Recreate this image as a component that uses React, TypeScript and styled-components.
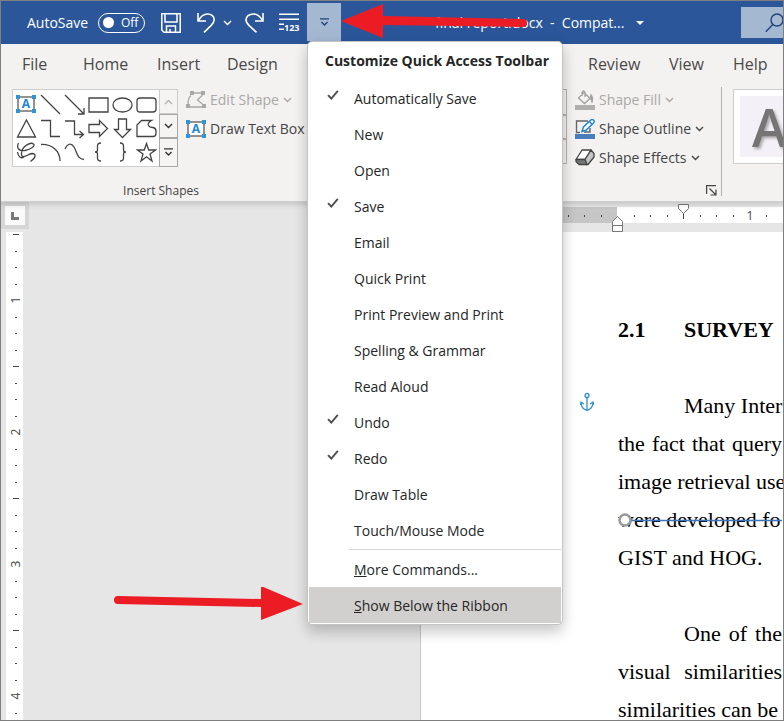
import React, { useEffect, useState } from "react";
import styled, { createGlobalStyle } from "styled-components";

const GlobalStyle = createGlobalStyle`
  * { box-sizing: border-box; }
  body { margin: 0; font-family: "Open Sans", "Noto Sans", sans-serif; font-size: 14px; color: #444; }
  button { font: inherit; color: inherit; background: none; border: 0; padding: 0; margin: 0; text-align: left; }
  svg { display: block; flex: none; }
`;

const Window = styled.div`
  display: flex;
  flex-direction: column;
  height: 100vh;
  border: 1px solid #7f7f7f;
  background: #e6e6e6;
  overflow: hidden;
`;

/* ---------- title bar ---------- */

const TitleBar = styled.header`
  display: flex;
  align-items: center;
  height: 43px;
  flex: none;
  padding-left: 26px;
  background: #2b579a;
  color: #fff;
`;

const AutoSave = styled.label`
  display: flex;
  align-items: center;
  gap: 8px;
  width: 118px;
  flex: none;
`;

const AutoSaveText = styled.span`
  width: 63px;
  white-space: nowrap;
`;

const Switch = styled.button`
  display: flex;
  align-items: center;
  gap: 7px;
  width: 47px;
  height: 20px;
  padding-left: 4px;
  border: 1px solid #fff;
  border-radius: 10px;
  font-size: 12px;
  line-height: 18px;
`;

const Knob = styled.span`
  width: 11px;
  height: 11px;
  border-radius: 50%;
  background: #fff;
`;

const QuickButton = styled.button<{ $gap: number }>`
  margin-left: ${(p) => p.$gap}px;
  flex: none;
`;

const CustomizeAnchor = styled.div`
  position: relative;
  z-index: 2;
  flex: none;
  align-self: flex-start;
  margin: 2px 0 0 7px;
`;

const CustomizeButton = styled.button`
  display: flex;
  align-items: center;
  justify-content: center;
  width: 34px;
  height: 38px;
  background: #a5b8d2;
`;

const TopArrow = styled.svg`
  position: absolute;
  left: 100%;
  top: 0;
`;

const DocTitle = styled.button`
  display: flex;
  align-items: center;
  gap: 12px;
  margin-left: 94px;
  font-size: 14px;
  white-space: pre;
`;

const SearchButton = styled.button`
  display: flex;
  align-items: center;
  margin-left: auto;
  width: 42px;
  height: 31px;
  padding-left: 24px;
  background: #a5b8d2;
  overflow: hidden;
`;

/* ---------- menu ---------- */

const Menu = styled.div`
  position: absolute;
  top: 38px;
  left: 0;
  width: 256px;
  padding-bottom: 1px;
  background: #fff;
  border: 1px solid #c6c4c2;
  border-radius: 5px;
  box-shadow: 0 8px 14px rgba(0, 0, 0, 0.18), 0 0 16px rgba(0, 0, 0, 0.06);
  color: #262626;
`;

const MenuTitle = styled.div`
  height: 38px;
  padding-left: 17px;
  font-weight: 700;
  line-height: 38px;
  white-space: nowrap;
`;

const MenuItem = styled.button<{ $active?: boolean }>`
  position: relative;
  display: grid;
  grid-template-columns: 45px 1fr;
  align-items: center;
  width: 252px;
  height: 36px;
  margin-left: 1px;
  background: ${(p) => (p.$active ? "#d2d0ce" : "transparent")};
  white-space: nowrap;
`;

const CheckCell = styled.span`
  padding: 0 0 6px 18px;
`;

const MenuRule = styled.hr`
  height: 1px;
  margin: 1px 1px 1px 41px;
  border: 0;
  background: #d8d8d8;
`;

const SideArrow = styled.svg`
  position: absolute;
  right: 100%;
  top: 0;
  margin-right: 6px;
`;

/* ---------- ribbon ---------- */

const Ribbon = styled.div`
  flex: none;
  background: #f3f2f1;
  border-bottom: 1px solid #cfcfcf;
  box-shadow: 0 2px 6px rgba(0, 0, 0, 0.16);
  position: relative;
`;

const Tabs = styled.nav`
  display: flex;
  height: 43px;
  padding: 0 0 4px 21px;
  font-size: 16px;
  color: #4a4948;
`;

const TabGroup = styled.div<{ $start?: number }>`
  display: flex;
  align-items: center;
  margin-left: ${(p) => p.$start ?? 0}px;
`;

const Tab = styled.button<{ $w: number }>`
  width: ${(p) => p.$w}px;
  flex: none;
  white-space: nowrap;
`;

const Panel = styled.div`
  display: flex;
  height: 114px;
  padding: 2px 0 0 11px;
`;

const Group = styled.section<{ $w: number }>`
  display: flex;
  flex-direction: column;
  justify-content: space-between;
  flex: none;
  width: ${(p) => p.$w}px;
`;

const GroupBody = styled.div`
  display: flex;
`;

const Caption = styled.div`
  height: 18px;
  font-size: 12px;
  line-height: 16px;
  text-align: center;
`;

const Gallery = styled.div`
  display: flex;
  height: 78px;
  background: #fff;
  border: 1px solid #cfcdcb;
  border-right: 0;
`;

const Tiles = styled.div`
  display: grid;
  grid-template-columns: repeat(6, 24px);
  grid-auto-rows: 24px;
  width: 146px;
  padding: 2px 1px;
`;

const Tile = styled.button`
  display: grid;
  place-items: center;
`;

const Scroller = styled.div`
  display: grid;
  grid-template-rows: 25px 24px 1fr;
  width: 19px;
  margin: -1px 0;
`;

const ScrollButton = styled.button<{ $off?: boolean }>`
  display: grid;
  place-items: center;
  border: 1px solid ${(p) => (p.$off ? "#cfcdcb" : "#a9a7a5")};
  background: #f5f4f3;
`;

const Commands = styled.div`
  display: flex;
  flex-direction: column;
  margin: -4px 0 0 8px;
`;

const Command = styled.button<{ $off?: boolean }>`
  display: flex;
  align-items: center;
  gap: 4px;
  height: 29px;
  color: ${(p) => (p.$off ? "#a9a8a7" : "#444")};
  white-space: nowrap;
`;

const StylesEdge = styled.div`
  width: 5px;
  height: 75px;
  margin-left: 252px;
  display: grid;
  grid-template-rows: 26px 24px 1fr;
`;

const EdgeCell = styled.div`
  border: 1px solid #b5b3b1;
  border-left: 0;
`;

const StylesGroup = styled.section`
  display: flex;
  flex: none;
  align-items: flex-start;
`;

const Launcher = styled.button`
  align-self: flex-end;
  margin: 0 4px 5px 2px;
`;

const Divider = styled.div`
  width: 1px;
  height: 109px;
  margin: -2px 11px 0 0;
  background: #b3b1af;
`;

const WordArt = styled.div`
  flex: 1;
  height: 75px;
  padding: 6px 0 6px 6px;
  background: #fff;
  border: 1px solid #cfcdcb;
  border-right: 0;
  overflow: hidden;
`;

const WordArtTile = styled.button`
  width: 100%;
  height: 61px;
  padding-left: 12px;
  background: #f4f0f7;
  color: #757575;
  font-size: 52px;
  line-height: 61px;
  font-weight: 600;
  text-shadow: 2px 2px 3px rgba(0, 0, 0, 0.3);
`;

/* ---------- workspace ---------- */

const Workspace = styled.main`
  display: flex;
  flex: 1;
  min-height: 0;
`;

const RulerColumn = styled.div`
  width: 28px;
  flex: none;
`;

const TabSelector = styled.button`
  display: grid;
  place-items: center;
  width: 28px;
  height: 27px;
  border: 4px solid #d6d6d6;
  background: #fafafa;
`;

const VRuler = styled.svg`
  margin: 3px 0 0 5px;
  background: #fff;
`;

const PageColumn = styled.div`
  flex: 1;
  min-width: 0;
  margin-left: 391px;
`;

const HRuler = styled.svg`
  width: 100%;
`;

const Paper = styled.article`
  min-height: 100%;
  padding: 79px 0 0 197px;
  border-left: 1px solid #c8c8c8;
  background: #fff;
  color: #000;
  font-family: "Liberation Serif", serif;
  font-size: 22px;
  line-height: 38px;
`;

const Heading = styled.h2`
  display: grid;
  grid-template-columns: 66px 1fr;
  margin: 0 0 38px;
  font-size: 22px;
  font-weight: 700;
`;

const Paragraph = styled.div`
  position: relative;
  width: 164px;
  margin-bottom: 38px;
`;

const Line = styled.div<{ $indent?: boolean; $natural?: boolean }>`
  padding-left: ${(p) => (p.$indent ? 66 : 0)}px;
  white-space: nowrap;
  text-align-last: ${(p) => (p.$natural ? "left" : "justify")};
`;

const AnchorMark = styled.svg`
  position: absolute;
  left: -38px;
  top: 5px;
`;

const StrikeLine = styled.svg`
  position: absolute;
  left: 0;
  top: 126px;
`;

/* ---------- drawings ---------- */

const Chevron = ({ up, color = "currentColor" }: { up?: boolean; color?: string }) => (
  <svg width="9" height="6" viewBox="0 0 9 6" fill="none" stroke={color} strokeWidth="1.4">
    <path d={up ? "M1 5 4.5 1.5 8 5" : "M1 1 4.5 4.5 8 1"} />
  </svg>
);

const BarChevron = ({ color }: { color: string }) => (
  <svg width="9" height="9" viewBox="0 0 9 9" fill="none" stroke={color} strokeWidth="1.4">
    <path d="M0 .9H9M1.5 4 4.5 7 7.5 4" />
  </svg>
);

const SaveIcon = () => (
  <svg width="20" height="20" viewBox="0 0 20 20" fill="none" stroke="#fff" strokeWidth="1.5">
    <path d="M.8.8H19.2V19.2H3L.8 17ZM4 1V9H16V1M5.5 19V13H14.5V19M9 16V19" />
  </svg>
);

const UndoIcon = () => (
  <svg width="18" height="21" viewBox="0 0 18 21" fill="none" stroke="#fff" strokeWidth="1.6">
    <path d="M1 1V9H9M1.2 8.8C4 4 7 2 10.5 2C14.5 2 17.2 4.6 17.2 7.8C17.2 10 16 11.7 14 13.6L7 20.3" />
  </svg>
);

const RedoIcon = () => (
  <svg width="19" height="21" viewBox="0 0 19 21" fill="none" stroke="#fff" strokeWidth="1.6">
    <path d="M18 1V9H10M17.8 8.8C15 4 12 2 8.5 2C4 2 1 4.6 1 8C1 10 2 11.4 4.2 13.6L11.5 20.3" />
  </svg>
);

const LineNumbersIcon = () => (
  <svg width="21" height="19" viewBox="0 0 21 19" fill="#fff">
    <path d="M0 .5H20V2H0ZM0 5.5H20V7H0ZM0 10.5H5V12H0ZM0 15.5H5V17H0Z" />
    <text x="5" y="17.5" fontSize="9" fontWeight="700">123</text>
  </svg>
);

const CheckIcon = () => (
  <svg width="12" height="10" viewBox="0 0 12 10" fill="none" stroke="#505050" strokeWidth="1.9">
    <path d="M1 5.2 4.3 8.5 10.8.8" />
  </svg>
);

const TextBoxIcon = () => (
  <svg width="20" height="18" viewBox="0 0 20 18">
    <rect x="2" y="2" width="16" height="14" fill="#fff" stroke="#666" strokeWidth="1.4" />
    <path d="M0 0H4V4H0ZM16 0H20V4H16ZM0 14H4V18H0ZM16 14H20V18H16Z" fill="#2f96d6" />
    <text x="10" y="13.2" textAnchor="middle" fontSize="12" fontWeight="700" fill="#2186cf">A</text>
  </svg>
);

const shapes: [string, string][] = [
  ["Line", "M1 1 20 20"],
  ["Arrow", "M1 1 19.5 19.5M20 14V20H14"],
  ["Rectangle", "M1 4H20V18H1Z"],
  ["Oval", "M10.5 4C16 4 20 7 20 11S16 18 10.5 18 1 15 1 11 5 4 10.5 4Z"],
  ["Rounded rectangle", "M4 4H17Q20 4 20 7V15Q20 18 17 18H4Q1 18 1 15V7Q1 4 4 4Z"],
  ["Triangle", "M10.5 2 19.5 19H1.5Z"],
  ["Elbow connector", "M1 2.5H10.5V18.5H20"],
  ["Elbow arrow", "M1 3H10.5V16.5H19M15.5 13 19.5 16.5 15.5 20"],
  ["Right arrow", "M1 6.5H11.5V2.5L19.5 10.5 11.5 18.5V14.5H1Z"],
  ["Down arrow", "M6.5 1H14.5V11.5H18.5L10.5 19.5 2.5 11.5H6.5Z"],
  ["Freeform", "M5.5 2.5H15.5Q11 5 12.500 7.500Q13.500 9.500 17 9.500Q20 10 20 13V15.500Q20 18.500 17 18.500H1V7Z"],
  ["Scribble", "M2.5 1C0 6 3 9.500 9 8.500C15 7 19.500 4 17.500 2C14.500-.5 6 4.500 5.500 11C5 18.500 11 12.500 16 11.500C20.500 11.500 20 16 14.500 19.500M1.500 10C2 14.500 5 17 8 15"],
  ["Arc", "M1 2.5C12 2 20 9 20 19"],
  ["Curve", "M1 7C3 2 7 0 10 5C13 10 13 17 20 17.5"],
  ["Left brace", "M13 1Q9.5 1 9.5 4V8Q9.5 10 7 10Q9.5 10 9.5 12V16Q9.5 19 13 19"],
  ["Right brace", "M8 1Q11.5 1 11.5 4V8Q11.5 10 14 10Q11.5 10 11.5 12V16Q11.5 19 8 19"],
  ["Star", "M10.5 1.5 12.7 8H19.5L14 12 16 19 10.5 14.8 5 19 7 12 1.5 8H8.3Z"],
];

const EditShapeIcon = () => (
  <svg width="20" height="18" viewBox="0 0 20 18" fill="none" stroke="#a9a8a7" strokeWidth="1.3">
    <path d="M5 4.500C3 6 2 9 2 13M8 2H15M16.500 4 11.500 9 17.500 14M4 16H16" />
    <path d="M4 0H8V4H4ZM15 0H19V4H15ZM0 13H4V17H0ZM16 13H20V17H16Z" fill="#a9a8a7" stroke="none" />
  </svg>
);

const FillIcon = () => (
  <svg width="20" height="20" viewBox="0 0 20 20" fill="none" stroke="#a3a2a1" strokeWidth="1.3">
    <path d="M9 2.5 15 8.5 9.5 13.5 3.5 8ZM7 6V2.5Q8.5-.5 10 2.5V7" />
    <path d="M16 5Q18.5 8 17 12L15.5 8Z" fill="#a3a2a1" />
    <path d="M0 15H20V20H0Z" fill="#b1afad" stroke="none" />
  </svg>
);

const OutlineIcon = () => (
  <svg width="20" height="20" viewBox="0 0 20 20" fill="none">
    <path d="M13 2H1.5V13.5H5M15 9V13H9" stroke="#666" strokeWidth="1.4" />
    <path d="M7 12.5 8.5 8 16 .8Q18-.2 19.2 2 19.2 3.5 18.5 4L11 11.3Z" fill="#fff" stroke="#2186cf" strokeWidth="1.5" />
    <path d="M14.5 2.5 17.2 5.5" stroke="#2186cf" strokeWidth="1.3" />
    <path d="M0 15H20V20H0Z" fill="#4a7ebb" />
  </svg>
);

const EffectsIcon = () => (
  <svg width="20" height="17" viewBox="0 0 20 17" strokeLinejoin="round" stroke="#444" strokeWidth="1.3">
    <path d="M7 1H16L10 10.5H1Z" fill="#fff" />
    <path d="M16 1 19 4.500V8L13 15.5H11L10 10.5Z" fill="#c5c5c5" />
    <path d="M1 10.5H10L12 15.5H4L1 12.500Z" fill="#777" />
  </svg>
);

const LauncherIcon = () => (
  <svg width="11" height="11" viewBox="0 0 11 11" fill="none" stroke="#444" strokeWidth="1.2">
    <path d="M.6 9V.6H10M3.5 3.5 9.5 9.5M10 4.5V10H4.5" />
  </svg>
);

const TICK = 16.5;

const VerticalRuler = () => (
  <VRuler width="17" height="489" viewBox="0 0 17 489" aria-label="Vertical ruler">
    {Array.from({ length: 30 }, (_, i) => {
      const y = Math.round(2 + i * TICK);
      if (i % 8 === 4) {
        return (
          <text key={i} transform={`translate(14 ${y}) rotate(-90)`} textAnchor="middle" fontSize="12" fill="#444">
            {(i + 4) / 8}
          </text>
        );
      }
      return i % 8 === 0 ? (
        <rect key={i} x="7" y={y} width="6" height="1" fill="#444" />
      ) : (
        <rect key={i} x="9" y={y} width="2" height="1" fill="#444" />
      );
    })}
  </VRuler>
);

const RULER_ORIGIN = 617;

const useTickCount = () => {
  const count = () => Math.max(0, Math.floor((window.innerWidth - RULER_ORIGIN - 8) / TICK));
  const [ticks, setTicks] = useState(count);
  useEffect(() => {
    const update = () => setTicks(count());
    window.addEventListener("resize", update);
    return () => window.removeEventListener("resize", update);
  }, []);
  return ticks;
};

const HorizontalRuler = () => {
  const ticks = useTickCount();
  return (
    <HRuler height="30" aria-label="Horizontal ruler">
      <rect width="197" y="5" height="16" fill="#c6c6c6" />
      <rect x="197" y="5" width="100%" height="16" fill="#fff" />
      {Array.from({ length: ticks + 12 }, (_, i) => i - 11).map((i) => {
        const x = Math.round(197 + i * TICK);
        if (i === 0) return null;
        if (i > 0 && i % 8 === 0) {
          return (
            <text key={i} x={x + 1} y="18" textAnchor="middle" fontSize="12" fill="#444">
              {i / 8}
            </text>
          );
        }
        return i % 4 === 0 ? (
          <rect key={i} x={x} y="11" width="1" height="6" fill="#444" />
        ) : (
          <rect key={i} x={x} y="13" width="1" height="2" fill="#444" />
        );
      })}
      <path d="M258.500 2.500H268.500V6.500L263.500 11.500 258.500 6.500Z" fill="#fff" stroke="#777" />
      <path d="M192.500 29.500V19.500L197.500 14.500 202.500 19.500V29.500ZM192.500 23.500H202.500" fill="#fff" stroke="#777" />
    </HRuler>
  );
};

/* ---------- content ---------- */

const menuItems = [
  { label: "Automatically Save", checked: true },
  { label: "New" },
  { label: "Open" },
  { label: "Save", checked: true },
  { label: "Email" },
  { label: "Quick Print" },
  { label: "Print Preview and Print" },
  { label: "Spelling & Grammar" },
  { label: "Read Aloud" },
  { label: "Undo", checked: true },
  { label: "Redo", checked: true },
  { label: "Draw Table" },
  { label: "Touch/Mouse Mode" },
];

const CustomizeMenu = () => (
  <Menu role="menu">
    <MenuTitle>Customize Quick Access Toolbar</MenuTitle>
    {menuItems.map((item) => (
      <MenuItem key={item.label} role="menuitemcheckbox" aria-checked={!!item.checked}>
        <CheckCell>{item.checked && <CheckIcon />}</CheckCell>
        {item.label}
      </MenuItem>
    ))}
    <MenuRule />
    <MenuItem role="menuitem">
      <CheckCell />
      <span><u>M</u>ore Commands...</span>
    </MenuItem>
    <MenuItem role="menuitem" $active>
      <CheckCell />
      <span><u>S</u>how Below the Ribbon</span>
      <SideArrow width="190" height="36" viewBox="0 0 190 36" fill="#ec1c24">
        <path d="M5 9 148 12V-1L190 17 148 33V20L5 17A4 4 0 0 1 5 9Z" />
      </SideArrow>
    </MenuItem>
  </Menu>
);

export default function App() {
  return (
    <>
      <GlobalStyle />
      <Window>
        <TitleBar>
          <AutoSave>
            <AutoSaveText>AutoSave</AutoSaveText>
            <Switch role="switch" aria-checked="false"><Knob />Off</Switch>
          </AutoSave>
          <QuickButton $gap={16} aria-label="Save"><SaveIcon /></QuickButton>
          <QuickButton $gap={16} aria-label="Undo"><UndoIcon /></QuickButton>
          <QuickButton $gap={8} aria-label="Undo history"><Chevron /></QuickButton>
          <QuickButton $gap={13} aria-label="Redo"><RedoIcon /></QuickButton>
          <QuickButton $gap={15} aria-label="Line numbers"><LineNumbersIcon /></QuickButton>
          <CustomizeAnchor>
            <CustomizeButton aria-label="Customize Quick Access Toolbar"><BarChevron color="#1f4478" /></CustomizeButton>
            <CustomizeMenu />
            <TopArrow width="188" height="38" viewBox="0 0 188 38" fill="#ec1c24">
              <path d="M0 18 42 1V13L182 16A4 4 0 0 1 182 24L42 22V35Z" />
            </TopArrow>
          </CustomizeAnchor>
          <DocTitle>
            <span>final report.docx  -  Compat...</span>
            <svg width="8" height="4" viewBox="0 0 8 4" fill="#fff"><path d="M0 0H8L4 4Z" /></svg>
          </DocTitle>
          <SearchButton aria-label="Search">
            <svg width="20" height="20" viewBox="0 0 20 20" fill="none" stroke="#1f4478" strokeWidth="1.4">
              <circle cx="12" cy="7" r="6" /><path d="M7.8 11.5.8 18.8" />
            </svg>
          </SearchButton>
        </TitleBar>

        <Ribbon>
          <Tabs>
            <TabGroup>
              <Tab $w={61}>File</Tab>
              <Tab $w={74}>Home</Tab>
              <Tab $w={70}>Insert</Tab>
              <Tab $w={52}>Design</Tab>
            </TabGroup>
            <TabGroup $start={309}>
              <Tab $w={81}>Review</Tab>
              <Tab $w={64}>View</Tab>
              <Tab $w={40}>Help</Tab>
            </TabGroup>
          </Tabs>
          <Panel>
            <Group $w={298}>
              <GroupBody>
                <Gallery>
                  <Tiles>
                    <Tile aria-label="Text box"><TextBoxIcon /></Tile>
                    {shapes.map(([name, d]) => (
                      <Tile key={name} aria-label={name}>
                        <svg width="21" height="21" viewBox="0 0 21 21" fill="none" stroke="#444" strokeWidth="1.3">
                          <path d={d} />
                        </svg>
                      </Tile>
                    ))}
                  </Tiles>
                  <Scroller>
                    <ScrollButton $off aria-label="Scroll up"><Chevron up color="#b5b3b1" /></ScrollButton>
                    <ScrollButton aria-label="Scroll down"><Chevron color="#333" /></ScrollButton>
                    <ScrollButton aria-label="More shapes"><BarChevron color="#333" /></ScrollButton>
                  </Scroller>
                </Gallery>
                <Commands>
                  <Command $off><EditShapeIcon />Edit Shape<Chevron /></Command>
                  <Command><TextBoxIcon />Draw Text Box</Command>
                </Commands>
              </GroupBody>
              <Caption>Insert Shapes</Caption>
            </Group>
            <StylesGroup>
              <StylesEdge><EdgeCell /><EdgeCell /><EdgeCell /></StylesEdge>
              <Commands>
                <Command $off><FillIcon />Shape Fill<Chevron /></Command>
                <Command><OutlineIcon />Shape Outline<Chevron /></Command>
                <Command><EffectsIcon />Shape Effects<Chevron /></Command>
              </Commands>
              <Launcher aria-label="Shape format settings"><LauncherIcon /></Launcher>
              <Divider />
            </StylesGroup>
            <WordArt><WordArtTile>A</WordArtTile></WordArt>
          </Panel>
        </Ribbon>

        <Workspace>
          <RulerColumn>
            <TabSelector aria-label="Tab selector">
              <svg width="8" height="8" viewBox="0 0 8 8" fill="#777"><path d="M0 0H3V5H8V8H0Z" /></svg>
            </TabSelector>
            <VerticalRuler />
          </RulerColumn>
          <PageColumn>
            <HorizontalRuler />
            <Paper>
              <Heading><span>2.1</span><span>SURVEY</span></Heading>
              <Paragraph>
                <AnchorMark width="14" height="20" viewBox="0 0 14 20" fill="none" stroke="#2f8fcb" strokeWidth="1.3">
                  <circle cx="7" cy="3.5" r="2" />
                  <path d="M7 5.5V18M1 10.5C1 15 4 17.5 7 18.5C10 17.5 13 15 13 10.5M.5 13 1 10 4 12M13.5 13 13 10 10 12" />
                </AnchorMark>
                <Line $indent $natural>Many Inter</Line>
                <Line>the fact that query</Line>
                <Line $natural>image retrieval use</Line>
                <Line $natural>were developed fo</Line>
                <Line $natural>GIST and HOG.</Line>
                <StrikeLine width="164" height="14" viewBox="0 0 164 14">
                  <path d="M13 7.500H164" stroke="#3d75bd" strokeWidth="1.400" />
                  <circle cx="7" cy="7" r="5.5" fill="#fff" stroke="#9a9a9a" strokeWidth="2.5" />
                </StrikeLine>
              </Paragraph>
              <Paragraph>
                <Line $indent>One of the</Line>
                <Line>visual similarities</Line>
                <Line $natural>similarities can be</Line>
              </Paragraph>
            </Paper>
          </PageColumn>
        </Workspace>
      </Window>
    </>
  );
}
